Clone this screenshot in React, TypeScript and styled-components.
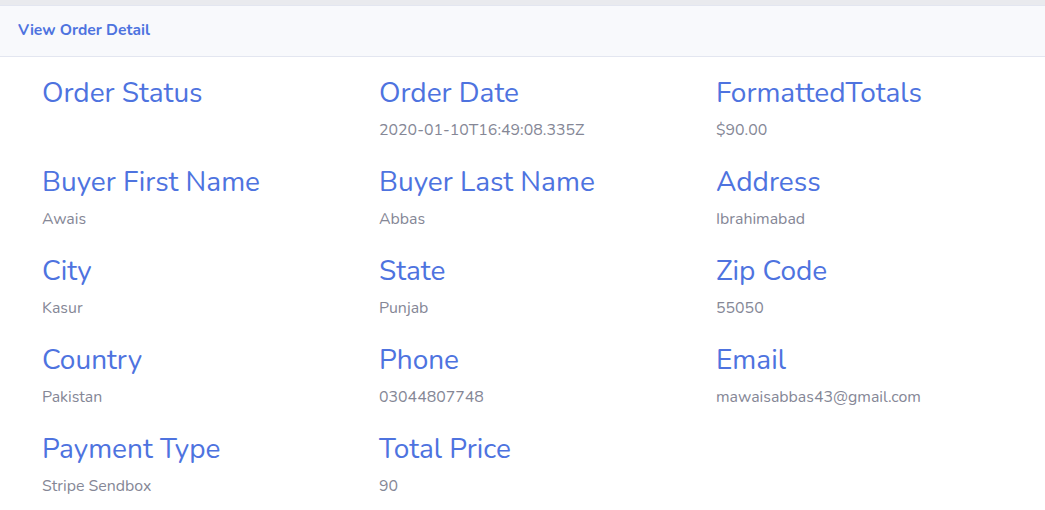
import React from "react";
import styled, { createGlobalStyle } from "styled-components";

const GlobalStyle = createGlobalStyle`
  html, body { margin: 0; padding: 0; background: #ffffff; }
  body { font-family: "Nunito", "Lato", "Open Sans", sans-serif; }
`;

const Page = styled.div`
  width: 1045px;
  height: 510px;
  overflow: hidden;
  background: #ffffff;
  display: flex;
  flex-direction: column;
`;

const TopStrip = styled.div`
  height: 5px;
  background: #e9eaee;
  border-bottom: 1px solid #e3e6f0;
`;

const CardHeader = styled.div`
  height: 51px;
  box-sizing: border-box;
  padding: 0 0 2px 18px;
  display: flex;
  align-items: center;
  background: #f8f9fc;
  border-bottom: 1px solid #e3e6f0;
`;

const HeaderTitle = styled.h6`
  margin: 0;
  font-size: 15.6px;
  font-weight: 700;
  color: #4e73df;
`;

const Body = styled.div`
  display: grid;
  grid-template-columns: repeat(3, 337px);
  row-gap: 23px;
  padding: 19px 0 0 42px;
`;

const Field = styled.div`
  display: flex;
  flex-direction: column;
`;

const Label = styled.h3`
  margin: 0 0 8px 0;
  font-size: 28px;
  line-height: 34px;
  font-weight: 400;
  color: #4e73df;
  white-space: nowrap;
`;

const Value = styled.p`
  margin: 0;
  font-size: 15.9px;
  line-height: 24px;
  color: #858796;
  min-height: 24px;
  white-space: nowrap;
`;

const fields: [string, string][] = [
  ["Order Status", ""],
  ["Order Date", "2020-01-10T16:49:08.335Z"],
  ["FormattedTotals", "$90.00"],
  ["Buyer First Name", "Awais"],
  ["Buyer Last Name", "Abbas"],
  ["Address", "Ibrahimabad"],
  ["City", "Kasur"],
  ["State", "Punjab"],
  ["Zip Code", "55050"],
  ["Country", "Pakistan"],
  ["Phone", "03044807748"],
  ["Email", "mawaisabbas43@gmail.com"],
  ["Payment Type", "Stripe Sendbox"],
  ["Total Price", "90"],
];

export default function App() {
  return (
    <>
      <GlobalStyle />
      <Page>
        <TopStrip />
        <CardHeader>
          <HeaderTitle>View Order Detail</HeaderTitle>
        </CardHeader>
        <Body>
          {fields.map(([label, value]) => (
            <Field key={label}>
              <Label>{label}</Label>
              <Value>{value}</Value>
            </Field>
          ))}
        </Body>
      </Page>
    </>
  );
}
